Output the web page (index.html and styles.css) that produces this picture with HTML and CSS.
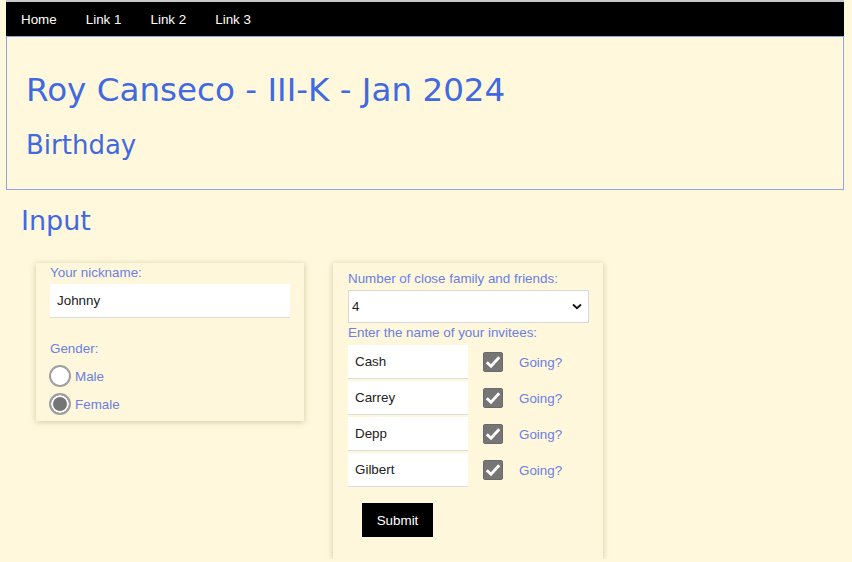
FILE: index.html
```html
<!DOCTYPE html>
<html>
<head>
<meta charset="utf-8">
<link rel="stylesheet" href="styles.css">
</head>
<body>
<div class="page">
  <nav class="nav">
    <a class="nav-link" href="#">Home</a>
    <a class="nav-link" href="#">Link 1</a>
    <a class="nav-link" href="#">Link 2</a>
    <a class="nav-link" href="#">Link 3</a>
  </nav>
  <header class="header">
    <h1 class="title">Roy Canseco - III-K - Jan 2024</h1>
    <h2 class="subtitle">Birthday</h2>
  </header>
  <h2 class="section-title">Input</h2>
  <div class="cards">
    <form class="card card-left">
      <label class="label">Your nickname:</label>
      <input class="text-input nick" type="text" value="Johnny">
      <label class="label gender">Gender:</label>
      <label class="radio-row"><input class="radio" type="radio" name="g"><span>Male</span></label>
      <label class="radio-row"><input class="radio" type="radio" name="g" checked><span>Female</span></label>
    </form>
    <form class="card card-right">
      <label class="label">Number of close family and friends:</label>
      <div class="select-box">
        <span class="select-value">4</span>
        <svg class="chev" width="10" height="7" viewBox="0 0 10 7"><path d="M1 1.5 L5 5.2 L9 1.5" fill="none" stroke="#111" stroke-width="1.8"/></svg>
      </div>
      <label class="label invitees">Enter the name of your invitees:</label>
      <div class="rows">
        <div class="row"><input class="text-input name" type="text" value="Cash"><span class="check"><svg width="16" height="14" viewBox="0 0 16 14"><path d="M1.8 7.2 L6 11.2 L14.2 2.2" fill="none" stroke="#fff" stroke-width="2.8"/></svg></span><span class="going">Going?</span></div>
        <div class="row"><input class="text-input name" type="text" value="Carrey"><span class="check"><svg width="16" height="14" viewBox="0 0 16 14"><path d="M1.8 7.2 L6 11.2 L14.2 2.2" fill="none" stroke="#fff" stroke-width="2.8"/></svg></span><span class="going">Going?</span></div>
        <div class="row"><input class="text-input name" type="text" value="Depp"><span class="check"><svg width="16" height="14" viewBox="0 0 16 14"><path d="M1.8 7.2 L6 11.2 L14.2 2.2" fill="none" stroke="#fff" stroke-width="2.8"/></svg></span><span class="going">Going?</span></div>
        <div class="row"><input class="text-input name" type="text" value="Gilbert"><span class="check"><svg width="16" height="14" viewBox="0 0 16 14"><path d="M1.8 7.2 L6 11.2 L14.2 2.2" fill="none" stroke="#fff" stroke-width="2.8"/></svg></span><span class="going">Going?</span></div>
      </div>
      <button class="submit" type="button">Submit</button>
    </form>
  </div>
</div>
</body>
</html>
```
FILE: styles.css
```css
html, body {
  margin: 0;
  padding: 0;
  background: #fff8dc;
  font-family: "Liberation Sans", Arial, sans-serif;
}
.page {
  width: 838px;
  margin-left: 6px;
  border-top: 2px solid #c9c9c9;
  margin-right: 8px;
}
.nav {
  background: #000;
  height: 34px;
  display: flex;
  align-items: center;
}
.nav-link {
  color: #fff;
  text-decoration: none;
  font-size: 13.4px;
  padding: 0 15px;
}
.nav-link + .nav-link {
  margin-left: -1px;
}
.header {
  border: 1px solid #8ea6e8;
  height: 152px;
  padding: 0 19px;
  box-sizing: content-box;
}
.title {
  font-family: "Comic Sans MS", "DejaVu Sans", sans-serif;
  color: #4169e1;
  font-weight: normal;
  font-size: 32.6px;
  margin: 33px 0 0 0;
  line-height: 40px;
}
.subtitle {
  font-family: "Comic Sans MS", "DejaVu Sans", sans-serif;
  color: #4169e1;
  font-weight: normal;
  font-size: 26px;
  margin: 18px 0 0 0;
  line-height: 34px;
}
.section-title {
  font-family: "Comic Sans MS", "DejaVu Sans", sans-serif;
  color: #4169e1;
  font-weight: normal;
  font-size: 27px;
  margin: 13px 0 0 15px;
  line-height: 36px;
}
.cards {
  display: flex;
  align-items: flex-start;
  gap: 29px;
  margin: 24px 0 0 30px;
}
.card {
  background: #fff7db;
  box-shadow: 0 1px 6px rgba(120, 110, 70, 0.35);
  display: flex;
  flex-direction: column;
  align-items: flex-start;
  margin: 0;
}
.card-left {
  width: 240px;
  padding: 2px 14px 6px 14px;
}
.card-right {
  width: 241px;
  padding: 8px 14px 22px 15px;
}
.label {
  color: #6a80e4;
  font-size: 13.4px;
  line-height: 16px;
}
.text-input {
  border: none;
  border-bottom: 1px solid #dcdcdc;
  background: #fff;
  font-family: "Liberation Sans", Arial, sans-serif;
  font-size: 13.4px;
  color: #222;
  outline: none;
  box-sizing: border-box;
  padding: 0 7px;
  margin: 0;
}
.nick {
  width: 240px;
  height: 34px;
  margin-top: 3px;
}
.gender {
  margin-top: 23px;
}
.radio-row {
  display: flex;
  align-items: center;
  gap: 4px;
  color: #6a80e4;
  font-size: 13.4px;
  height: 22px;
  margin-top: 8px;
}
.radio-row + .radio-row {
  margin-top: 6px;
}
.radio {
  appearance: none;
  -webkit-appearance: none;
  width: 22px;
  height: 22px;
  margin: 0 0 0 -1px;
  border: 2px solid #a0a0a0;
  border-radius: 50%;
  background: #fff;
  box-sizing: border-box;
}
.radio:checked {
  background: #757575;
  box-shadow: inset 0 0 0 2px #fff;
}
.select-box {
  width: 241px;
  height: 33px;
  box-sizing: border-box;
  border: 1px solid #d9d9d9;
  background: #fff;
  display: flex;
  align-items: center;
  justify-content: space-between;
  padding: 0 6px 0 3px;
  margin-top: 3px;
  font-size: 13.4px;
  color: #222;
}
.invitees {
  margin-top: 2px;
}
.rows {
  display: flex;
  flex-direction: column;
  gap: 2px;
  margin-top: 4px;
}
.row {
  display: flex;
  align-items: center;
}
.name {
  width: 120px;
  height: 34px;
}
.check {
  width: 20px;
  height: 20px;
  border-radius: 2px;
  background: #767676;
  border: 1px solid #6a6a6a;
  box-sizing: border-box;
  margin-left: 15px;
  display: flex;
  align-items: center;
  justify-content: center;
}
.going {
  color: #6a80e4;
  font-size: 13.4px;
  margin-left: 16px;
}
.submit {
  background: #000;
  color: #fff;
  border: none;
  font-family: "Liberation Sans", Arial, sans-serif;
  font-size: 13.4px;
  width: 71px;
  height: 34px;
  margin: 16px 0 0 14px;
  padding: 0;
}
```
